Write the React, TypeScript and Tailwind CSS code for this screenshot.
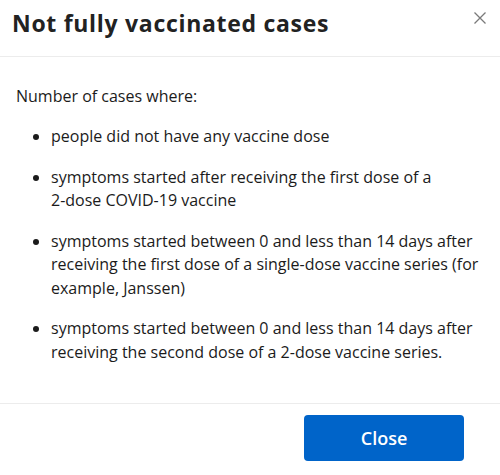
import React from "react";

export default function App() {
  const items: React.ReactNode[] = [
    "people did not have any vaccine dose",
    <>symptoms started after receiving the first dose of a<br />2-dose COVID-19 vaccine</>,
    "symptoms started between 0 and less than 14 days after receiving the first dose of a single-dose vaccine series (for example, Janssen)",
    "symptoms started between 0 and less than 14 days after receiving the second dose of a 2-dose vaccine series.",
  ];
  return (
    <div className="w-[500px] h-[475px] bg-white text-[#1b1b1b] overflow-hidden" style={{ fontFamily: '"Open Sans", sans-serif' }}>
      <div className="relative h-[57px] border-b border-[#ececec] pl-3 pt-[7px]">
        <h1 className="text-[23px] font-bold leading-[32px] tracking-[0.7px] text-[#222]" style={{ fontFamily: '"Open Sans", sans-serif' }}>
          Not fully vaccinated cases
        </h1>
        <button className="absolute right-[13px] top-[11px] w-[14px] h-[14px] text-[#7a7a7a]" aria-label="Close">
          <svg viewBox="0 0 14 14" width="14" height="14" fill="none" stroke="currentColor" strokeWidth="1.3">
            <path d="M1.5 1.5 L12.5 12.5 M12.5 1.5 L1.5 12.5" />
          </svg>
        </button>
      </div>
      <div className="h-[347px] border-b border-[#ececec] pl-4 pr-[10px] pt-[27px]">
        <p className="text-[16px] leading-[24px]">Number of cases where:</p>
        <ul className="mt-[17px] flex flex-col gap-[17px] pl-[35px] list-disc">
          {items.map((t, i) => (
            <li key={i} className="text-[16px] leading-[23.5px]">
              {t}
            </li>
          ))}
        </ul>
      </div>
      <div className="flex justify-end pr-[36px] pt-[11px]">
        <button className="w-[160px] h-[46px] rounded-[4px] bg-[#0064c9] text-white text-[18px] font-semibold">
          Close
        </button>
      </div>
    </div>
  );
}
